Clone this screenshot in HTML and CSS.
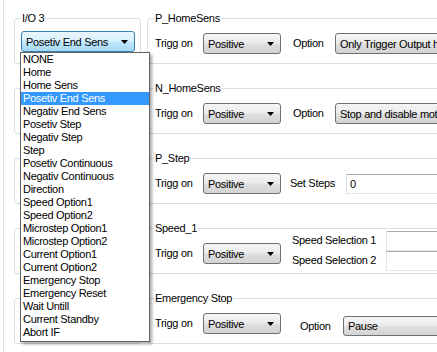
FILE: index.html
```html
<!DOCTYPE html>
<html>
<head>
<meta charset="utf-8">
<title>I/O settings</title>
<link rel="stylesheet" href="styles.css">
</head>
<body>
<div class="page">
  <div class="form">
    <fieldset class="group left">
      <legend>I/O 3</legend>
      <div class="row io">
        <div class="combo focus io-combo"><span class="val">Posetiv End Sens</span><svg class="arrow" width="7" height="4" viewBox="0 0 7 4"><path d="M0 0H7L3.5 4Z"/></svg></div>
      </div>
    </fieldset>
    <fieldset class="group right">
      <legend>P_HomeSens</legend>
      <div class="row">
        <span class="lbl trig">Trigg on</span>
        <div class="combo pos"><span class="val">Positive</span><svg class="arrow" width="7" height="4" viewBox="0 0 7 4"><path d="M0 0H7L3.5 4Z"/></svg></div>
        <span class="lbl opt">Option</span>
        <div class="combo long"><span class="val">Only Trigger Output h</span></div>
      </div>
    </fieldset>

    <fieldset class="group left blank"></fieldset>
    <fieldset class="group right">
      <legend>N_HomeSens</legend>
      <div class="row">
        <span class="lbl trig">Trigg on</span>
        <div class="combo pos"><span class="val">Positive</span><svg class="arrow" width="7" height="4" viewBox="0 0 7 4"><path d="M0 0H7L3.5 4Z"/></svg></div>
        <span class="lbl opt">Option</span>
        <div class="combo long"><span class="val">Stop and disable mot</span></div>
      </div>
    </fieldset>

    <fieldset class="group left blank"></fieldset>
    <fieldset class="group right">
      <legend>P_Step</legend>
      <div class="row">
        <span class="lbl trig">Trigg on</span>
        <div class="combo pos"><span class="val">Positive</span><svg class="arrow" width="7" height="4" viewBox="0 0 7 4"><path d="M0 0H7L3.5 4Z"/></svg></div>
        <span class="lbl steps">Set Steps</span>
        <div class="field steps-field">0</div>
      </div>
    </fieldset>

    <fieldset class="group left blank"></fieldset>
    <fieldset class="group right">
      <legend>Speed_1</legend>
      <div class="row">
        <span class="lbl trig">Trigg on</span>
        <div class="combo pos"><span class="val">Positive</span><svg class="arrow" width="7" height="4" viewBox="0 0 7 4"><path d="M0 0H7L3.5 4Z"/></svg></div>
        <div class="speed">
          <span class="lbl">Speed Selection 1</span>
          <div class="field"></div>
          <span class="lbl">Speed Selection 2</span>
          <div class="field"></div>
        </div>
      </div>
    </fieldset>

    <fieldset class="group left blank"></fieldset>
    <fieldset class="group right">
      <legend>Emergency Stop</legend>
      <div class="row">
        <span class="lbl trig">Trigg on</span>
        <div class="combo pos"><span class="val">Positive</span><svg class="arrow" width="7" height="4" viewBox="0 0 7 4"><path d="M0 0H7L3.5 4Z"/></svg></div>
        <div class="emg-opt">
          <span class="lbl opt2">Option</span>
          <div class="combo pause"><span class="val">Pause</span></div>
        </div>
      </div>
    </fieldset>
  </div>

  <ul class="droplist">
    <li>NONE</li>
    <li>Home</li>
    <li>Home Sens</li>
    <li class="sel">Posetiv End Sens</li>
    <li>Negativ End Sens</li>
    <li>Posetiv Step</li>
    <li>Negativ Step</li>
    <li>Step</li>
    <li>Posetiv Continuous</li>
    <li>Negativ Continuous</li>
    <li>Direction</li>
    <li>Speed Option1</li>
    <li>Speed Option2</li>
    <li>Microstep Option1</li>
    <li>Microstep Option2</li>
    <li>Current Option1</li>
    <li>Current Option2</li>
    <li>Emergency Stop</li>
    <li>Emergency Reset</li>
    <li>Wait Untill</li>
    <li>Current Standby</li>
    <li>Abort IF</li>
  </ul>
</div>
</body>
</html>
```

FILE: styles.css
```css
html, body {
  margin: 0;
  padding: 0;
}

body {
  width: 437px;
  height: 352px;
  overflow: hidden;
  background: #ffffff;
  font-family: "Liberation Sans", Arial, sans-serif;
  font-size: 11px;
  letter-spacing: -0.3px;
  color: #000000;
}

.page {
  position: relative;
  box-sizing: border-box;
  height: 352px;
  margin-left: 3px;
  border-left: 1px solid #e2e5e8;
  padding: 12px 0 0 10px;
}

.form {
  display: grid;
  grid-template-columns: 127px 330px;
  column-gap: 6px;
  row-gap: 18px;
}

.group {
  box-sizing: border-box;
  min-width: 0;
  height: 52px;
  margin: 0;
  padding: 0 6px 0 6px;
  border: 1px solid #d5dfe5;
  border-radius: 3px;
}

.group.right {
  padding-left: 7px;
}

.group.blank {
  height: 46px;
  margin-top: 6px;
}

legend {
  padding: 0 1px;
  line-height: 13px;
  font-size: 11px;
}

.group.right legend {
  margin-left: -1px;
}

.row {
  display: flex;
  align-items: center;
  height: 21px;
  margin-top: 8px;
  white-space: nowrap;
}

.row.io {
  margin-top: 6px;
}

.lbl {
  display: inline-block;
  line-height: 13px;
  flex: none;
}

.trig {
  width: 48px;
}

.opt {
  width: 42px;
  margin-left: 12px;
}

.steps {
  width: 56px;
  margin-left: 9px;
}

.combo {
  box-sizing: border-box;
  flex: none;
  display: flex;
  align-items: center;
  height: 21px;
  padding: 0 4px;
  border: 1px solid #707070;
  border-radius: 3px;
  background: linear-gradient(#f5f5f5, #ececec 45%, #dedede 55%, #d3d3d3);
  overflow: hidden;
  white-space: nowrap;
}

.combo .val {
  flex: 1;
  overflow: hidden;
}

.combo .arrow {
  flex: none;
  margin-left: 2px;
  margin-right: 2px;
}

.combo.focus {
  border-color: #3c7fb1;
  background: linear-gradient(#eaf6fd, #d9f0fc 48%, #bee6fd 52%, #a7d9f5);
}

.io-combo {
  width: 114px;
}

.pos {
  width: 78px;
}

.long {
  width: 140px;
}

.field {
  box-sizing: border-box;
  height: 20px;
  padding: 0 3px;
  border: 1px solid;
  border-color: #abadb3 #e3e9ef #e3e9ef #e2e3ea;
  background: #ffffff;
  line-height: 18px;
}

.steps-field {
  width: 120px;
  flex: none;
}

.speed {
  display: grid;
  grid-template-columns: 94px 80px;
  grid-auto-rows: 20px;
  align-items: center;
  margin-left: 11px;
  margin-top: -6px;
  flex: none;
}

.emg-opt {
  display: flex;
  align-items: center;
  margin-top: 5px;
  flex: none;
}

.opt2 {
  width: 43px;
  margin-left: 19px;
}

.pause {
  width: 120px;
  height: 20px;
}

.droplist {
  position: absolute;
  left: 16px;
  top: 52px;
  box-sizing: border-box;
  width: 130px;
  height: 290px;
  margin: 0;
  padding: 0;
  list-style: none;
  border: 1px solid #646464;
  background: #ffffff;
  box-shadow: 2px 2px 3px rgba(0, 0, 0, 0.35);
}

.droplist li {
  height: 13px;
  line-height: 13px;
  padding-left: 2px;
  white-space: nowrap;
}

.droplist li.sel {
  background: #3399ff;
  color: #ffffff;
}
```
